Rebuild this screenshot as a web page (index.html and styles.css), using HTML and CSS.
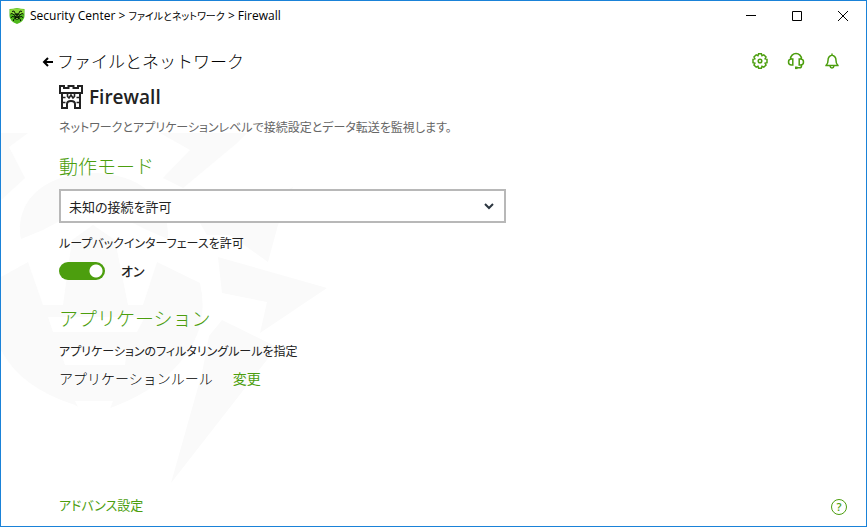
FILE: index.html
```html
<!DOCTYPE html>
<html lang="ja">
<head>
<meta charset="utf-8">
<meta name="viewport" content="width=device-width, initial-scale=1">
<title>Firewall</title>
<link rel="stylesheet" href="styles.css">
</head>
<body>
<div class="window">
  <svg class="watermark" viewBox="0 0 330 372" aria-hidden="true">
    <g fill="#fafafa">
      <path d="M0 13H27L8 27 24 58 0 80z"/>
      <path d="M159 13H246L236 23 182 68 162 58 189 30z"/>
      <path d="M20 119C13 78 48 53 92 53c46 0 77 26 75 66l-21-9-54-27-50 27z"/>
      <path d="M0 157 27 142 42 185H62L71 120 92 105 114 120 127 185H142L156 142 199 163Q208 202 186 233 162 268 112 287L109 288H79L74 285Q20 268 0 230z"/>
      <path d="M199 103Q250 90 292 67L277 105 267 142 229 115H206z"/>
      <path d="M217 137 326 168 259 213 266 182 221 173z"/>
      <path d="M221 200 276 227 170 363 201 253 208 216z"/>
    </g>
    <path fill="#fff" d="M47 197H144L136 212H52zM59 230H126L124 245H64zM74 281H112L109 289H78z"/>
  </svg>

  <header class="titlebar">
    <svg class="logo" viewBox="0 0 16 16" aria-hidden="true">
      <path d="M.5 1Q4 1 8 0q4 1 7.500 1v7q0 5-7.500 8Q.5 13 .5 8z" fill="#4fb81c"/>
      <path d="M1 1.500 8 .5l7 1V6H1z" fill="#8bd83c"/>
      <path d="M6.500 6 5 3 3 3.500M9.500 6 11 3l2 .5M6 7.500 3 5.500l-1.500.5M10 7.500l3-2 1.500.5M6 9 3 8.500 2 10M10 9l3-.5 1 1.500M6.500 10 4.500 11.500 4.500 13M9.500 10l2 1.500V13" stroke="#0b1a06" fill="none"/>
      <ellipse cx="8" cy="8.500" rx="2.500" ry="3.300" fill="#0b1a06"/>
      <path d="m6 7 1.500 1M10 7 8.500 8M7 10.500h2" stroke="#8bd83c" stroke-width=".8"/>
    </svg>
    <span class="crumbs">Security Center &gt; <span class="crumb-ja">ファイルとネットワーク</span> &gt; Firewall</span>
    <div class="controls">
      <button type="button" aria-label="最小化"><svg viewBox="0 0 12 12"><path d="M1 5.500h10"/></svg></button>
      <button type="button" aria-label="最大化"><svg viewBox="0 0 12 12"><path d="M1.500 1.500h9v9h-9z"/></svg></button>
      <button type="button" aria-label="閉じる"><svg viewBox="0 0 12 12"><path d="m1 1 10 10M11 1 1 11"/></svg></button>
    </div>
  </header>

  <main class="content">
    <div class="topline">
      <a class="back" href="#">
        <svg viewBox="0 0 12 12" aria-hidden="true"><path d="M11 6H2M6 2 2 6l4 4"/></svg>
        ファイルとネットワーク
      </a>
      <nav class="tools">
        <button type="button" aria-label="設定">
          <svg viewBox="0 0 18 18"><path d="M7.600 1.800h2.800l.6 1.900 1.800-.9 2.200 2.200-.9 1.800 1.900.6v3.200l-1.900.6.9 1.800-2.200 2.200-1.800-.9-.6 1.900H7.600L7 14.300l-1.800.9L3 13l.9-1.800-1.900-.6V7.400l1.900-.6L3 5l2.200-2.200 1.800.9z"/><circle cx="9" cy="9" r="1.800"/></svg>
        </button>
        <button type="button" aria-label="サポート">
          <svg viewBox="0 0 18 18"><path d="M3.500 8V7a5.500 5.500 0 0 1 11 0v1M5.800 7v6H4.500a3 3 0 0 1 0-6zM12.200 7v6h1.300a3 3 0 0 0 0-6zM14.500 12.500V14q0 1.800-2 1.800H9"/><path d="M8 15.800h2.500" stroke-width="2.600"/></svg>
        </button>
        <button type="button" aria-label="通知">
          <svg viewBox="0 0 18 18"><path d="M2.300 13.500h13.400M3.300 13.300Q5 11.500 5 8.500q0-4.300 4-5.500 4 1.200 4 5.500 0 3 1.700 4.800M9 3V1.500M7 14q.3 2 2 2t2-2"/></svg>
        </button>
      </nav>
    </div>

    <h1 class="title">
      <svg viewBox="0 0 24 24" aria-hidden="true"><path d="M1 1h4v2h4.500V1h5v2H19V1h4v7h-2v15h-5v-4q0-3-4-3t-4 3v4H3V8H1zM1.500 8h21"/><path d="M8.500 8v3.500L10 13l2-3 2 3 1.500-1.500V8M4 12.500h2.500M17.500 12.500H20M4 17.500h2.500M17.500 17.500H20" stroke-width="1.600"/></svg>
      Firewall
    </h1>
    <p class="lead">ネットワークとアプリケーションレベルで接続設定とデータ転送を監視します。</p>

    <section class="mode">
      <h2>動作モード</h2>
      <div class="picker">
        <select aria-label="動作モード"><option>未知の接続を許可</option></select>
        <svg viewBox="0 0 12 12" aria-hidden="true"><path d="m2 4 4 4 4-4"/></svg>
      </div>
      <label class="caption" for="loopback">ループバックインターフェースを許可</label>
      <div class="switch">
        <input type="checkbox" id="loopback" checked>
        <span>オン</span>
      </div>
    </section>

    <section class="apps">
      <h2>アプリケーション</h2>
      <p class="caption">アプリケーションのフィルタリングルールを指定</p>
      <p class="rule"><span>アプリケーションルール</span><a href="#">変更</a></p>
    </section>
  </main>

  <footer class="footer">
    <a href="#">アドバンス設定</a>
    <button class="help" type="button" aria-label="ヘルプ">?</button>
  </footer>
</div>
</body>
</html>
```
FILE: styles.css
```css
* {
  box-sizing: border-box;
  margin: 0;
  padding: 0;
}

body {
  background: #fff;
  color: #222;
  font: 12px/20px "Open Sans", "Noto Sans CJK JP", sans-serif;
}

button {
  display: grid;
  place-items: center;
  border: 0;
  background: none;
}

a {
  color: #4c9e0e;
  text-decoration: none;
}

svg {
  display: block;
  flex: none;
}

.window {
  position: relative;
  z-index: 0;
  display: flex;
  flex-direction: column;
  min-height: 100vh;
  border: 1px solid #1a82d8;
}

.watermark {
  position: absolute;
  z-index: -1;
  top: 119px;
  left: 0;
  width: 330px;
}

.titlebar {
  display: flex;
  align-items: center;
  height: 30px;
  padding-left: 8px;
  color: #000;
}

.logo {
  width: 16px;
  height: 16px;
  margin-right: 5px;
}

.crumbs {
  flex: 1;
}

.crumb-ja,
.lead,
.picker select,
.caption,
.switch span,
.footer a {
  font-family: "Noto Sans CJK JP", sans-serif;
  font-feature-settings: "palt";
}

.crumb-ja {
  font-size: 10px;
}

.controls {
  display: flex;
}

.controls button {
  width: 46px;
  height: 30px;
}

.controls svg {
  width: 12px;
  height: 12px;
  fill: none;
  stroke: #000;
}

.content {
  flex: 1;
  padding: 16px 16px 0 58px;
}

.topline {
  display: flex;
  align-items: center;
  justify-content: space-between;
  height: 30px;
}

.back {
  display: flex;
  align-items: center;
  gap: 3px;
  margin-left: -17px;
  color: #000;
  font-size: 17px;
  font-weight: 300;
}

.back svg {
  width: 12px;
  height: 12px;
  fill: none;
  stroke: #000;
  stroke-width: 2;
}

.tools {
  display: flex;
  align-self: flex-start;
}

.tools button {
  width: 36px;
  height: 28px;
}

.tools svg {
  width: 18px;
  height: 18px;
  fill: none;
  stroke: #4c9e0e;
  stroke-width: 1.5;
}

.title {
  display: flex;
  align-items: center;
  gap: 6px;
  height: 40px;
  font-size: 19px;
  font-weight: 600;
}

.title svg {
  width: 24px;
  height: 24px;
  fill: none;
  stroke: #222;
  stroke-width: 2;
}

.lead {
  color: #666;
}

.mode {
  margin-top: 18px;
}

.apps {
  margin-top: 18px;
}

h2 {
  color: #4c9e0e;
  font-size: 19px;
  font-weight: 300;
  line-height: 24px;
}

.picker {
  position: relative;
  max-width: 447px;
  margin: 10px 0;
}

.picker select {
  display: block;
  width: 100%;
  height: 34px;
  padding: 0 32px 0 8px;
  appearance: none;
  border: 2px solid #b8b8b8;
  border-radius: 0;
  background: #fff;
  color: #222;
  font-size: 13px;
}

.picker svg {
  position: absolute;
  top: 11px;
  right: 11px;
  width: 12px;
  height: 12px;
  fill: none;
  stroke: #2c3640;
  stroke-width: 2;
  pointer-events: none;
}

.caption {
  display: block;
}

.switch {
  display: flex;
  align-items: center;
  gap: 16px;
  height: 36px;
}

.switch input {
  width: 46px;
  height: 18px;
  appearance: none;
  border-radius: 9px;
  background: radial-gradient(circle at 37px 9px, #fff 6px, #4c9e0e 7px);
}

.switch span {
  font-size: 13px;
  font-weight: 500;
}

.apps .caption {
  margin: 10px 0 8px;
}

.rule {
  display: flex;
  gap: 20px;
  font-size: 14px;
}

.rule span {
  color: #000;
  font-weight: 300;
}

.footer {
  display: flex;
  align-items: center;
  justify-content: space-between;
  height: 38px;
  padding: 0 19px 0 58px;
}

.footer a {
  font-size: 13px;
  line-height: 38px;
  margin-top: -4px;
}

.help {
  width: 16px;
  height: 16px;
  border: 1px solid #4c9e0e;
  border-radius: 50%;
  color: #4c9e0e;
  font: 600 11px/14px "Open Sans", sans-serif;
}
```
